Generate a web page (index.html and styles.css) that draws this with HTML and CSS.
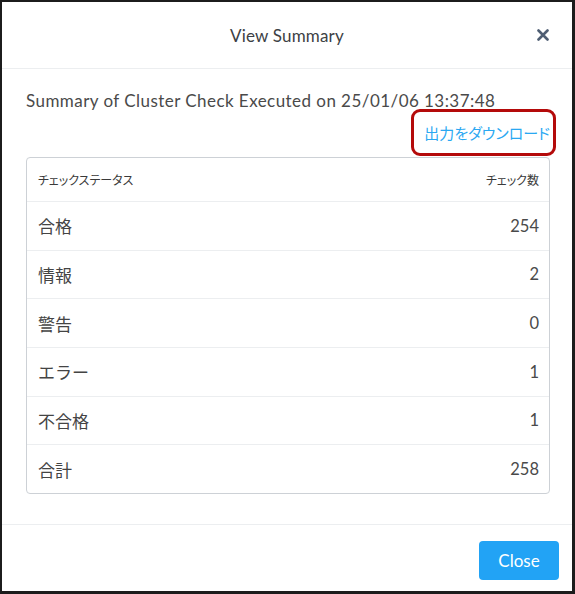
FILE: index.html
```html
<!DOCTYPE html>
<html lang="ja">
<head>
  <meta charset="UTF-8" />
  <meta name="viewport" content="width=device-width, initial-scale=1.0" />
  <title>View Summary</title>
  <link rel="stylesheet" href="styles.css">
</head>
<body>
  <!-- ======= MODAL ======= -->
  <div class="modal">
    <header class="modal-head">
      <h2>View Summary</h2>
      <button class="close-x" aria-label="Close">
        <svg width="12" height="12" viewBox="0 0 12 12"><path d="M1.5 1.5 L10.5 10.5 M10.5 1.5 L1.5 10.5" stroke="#4f5e73" stroke-width="2.6" stroke-linecap="round"/></svg>
      </button>
    </header>

    <section class="modal-body">
      <p class="summary">Summary of Cluster Check Executed on 25/01/06 13:37:48</p>
      <div class="dl-row">
        <a href="#" class="dl-link">出力をダウンロード</a>
      </div>

      <div class="status-table">
        <div class="row head"><span>チェックステータス</span><span>チェック数</span></div>
        <div class="row"><span>合格</span><span class="num">254</span></div>
        <div class="row"><span>情報</span><span class="num">2</span></div>
        <div class="row"><span>警告</span><span class="num">0</span></div>
        <div class="row"><span>エラー</span><span class="num">1</span></div>
        <div class="row"><span>不合格</span><span class="num">1</span></div>
        <div class="row"><span>合計</span><span class="num">258</span></div>
      </div>
    </section>

    <footer class="modal-foot">
      <button class="btn-close">Close</button>
    </footer>
  </div>
</body>
</html>
```

FILE: styles.css
```css
:root {
  --clr-text: #4a4a4a;
  --clr-title: #3d3f45;
  --clr-blue: #22a3f5;
  --clr-line: #eceef0;
  --clr-mark: #b40a0a;
}

/* ======= RESET ======= */
*,*::before,*::after{box-sizing:border-box;margin:0;padding:0}

body {
  font-family: "Lato", "Noto Sans CJK JP", sans-serif;
  background: #fff;
  color: var(--clr-text);
}

/* ======= MODAL FRAME ======= */
.modal{width:575px;height:594px;border:2px solid #1c1c1c;border-right-width:3px;border-bottom-width:3px;background:#fff;display:flex;flex-direction:column}

/* Header */
.modal-head{height:67px;border-bottom:1px solid var(--clr-line);display:flex;align-items:center;justify-content:center;position:relative}
.modal-head h2{font-size:17px;font-weight:400;color:var(--clr-title);letter-spacing:.01em}
.close-x{position:absolute;right:23px;top:27px;background:none;border:0;width:12px;height:12px;cursor:pointer;display:flex}

/* Body */
.modal-body{flex:1;padding:22px 22px 0 24px}
.summary{font-size:17px;line-height:20px;letter-spacing:.45px;color:var(--clr-text)}
.dl-row{display:flex;justify-content:flex-end;margin-top:8px;height:26px;align-items:center;padding-right:0}
.dl-link{position:relative;font-size:15px;color:#2aa8f2;text-decoration:none;font-feature-settings:"palt"}
.dl-link::after{content:"";position:absolute;left:-13px;right:-6px;top:-13px;bottom:-13px;border:3px solid var(--clr-mark);border-radius:9px}

/* Table */
.status-table{margin-top:12px;border:1px solid #cdd1d6;border-radius:4px;width:524px}
.row{display:flex;justify-content:space-between;align-items:center;padding:0 10px 0 11px;height:48.67px;border-top:1px solid var(--clr-line);font-size:17px;color:#444}
.row.head{height:43px;border-top:0;font-size:12px;font-feature-settings:"palt";color:#3a3a3a}
.row .num{font-size:16.5px;color:#4a4a4a}

/* Footer */
.modal-foot{height:67px;border-top:1px solid var(--clr-line);display:flex;justify-content:flex-end;align-items:flex-start;padding:16px 13px 0 0}
.btn-close{width:80px;height:39px;background:var(--clr-blue);color:#fff;border:0;border-radius:4px;font-family:inherit;font-size:17px;cursor:pointer}
```
